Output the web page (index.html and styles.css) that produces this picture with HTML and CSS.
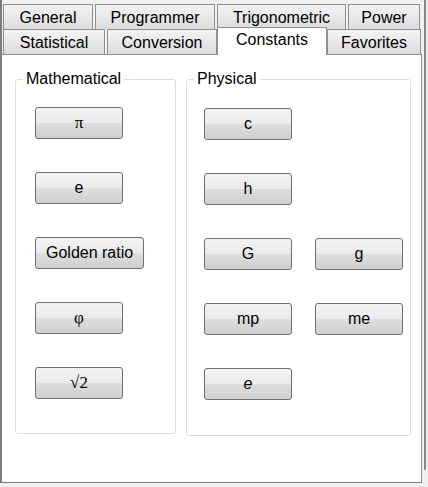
FILE: index.html
```html
<!DOCTYPE html>
<html>
<head>
<meta charset="utf-8">
<link rel="stylesheet" href="styles.css">
</head>
<body>
<div class="window">
  <div class="tabctl">
    <div class="tabstrip">
      <div class="row row-top">
        <div class="tab w-general">General</div>
        <div class="tab w-programmer">Programmer</div>
        <div class="tab w-trig">Trigonometric</div>
        <div class="tab w-power">Power</div>
      </div>
      <div class="row row-bottom">
        <div class="tab w-stat">Statistical</div>
        <div class="tab w-conv">Conversion</div>
        <div class="tab w-const selected">Constants</div>
        <div class="tab w-fav">Favorites</div>
      </div>
    </div>
    <div class="panel">
      <fieldset class="group group-math">
        <legend>Mathematical</legend>
        <div class="grid grid-math">
          <button class="btn sym">π</button>
          <button class="btn">e</button>
          <button class="btn wide">Golden ratio</button>
          <button class="btn sym">φ</button>
          <button class="btn sym">√2</button>
        </div>
      </fieldset>
      <fieldset class="group group-phys">
        <legend>Physical</legend>
        <div class="grid grid-phys">
          <button class="btn c1">c</button>
          <button class="btn c1">h</button>
          <button class="btn c1">G</button>
          <button class="btn">g</button>
          <button class="btn c1">mp</button>
          <button class="btn">me</button>
          <button class="btn c1 ital">e</button>
        </div>
      </fieldset>
    </div>
  </div>
  <div class="edge"><div class="edge-line"></div></div>
</div>
</body>
</html>
```

FILE: styles.css
```css
html, body {
  margin: 0;
  padding: 0;
  background: #f0f0f0;
}
body {
  font-family: "Liberation Sans", Arial, sans-serif;
  font-size: 16px;
  color: #000;
}
.window {
  display: flex;
  width: 428px;
  height: 487px;
}
.tabctl {
  width: 420px;
  height: 483px;
  border-left: 2px solid #7b7b83;
  display: flex;
  flex-direction: column;
}
.tabstrip {
  height: 54px;
  box-sizing: border-box;
  padding: 4px 0 0 1px;
}
.row {
  display: flex;
  gap: 2px;
  height: 25px;
}
.tab {
  box-sizing: border-box;
  height: 25px;
  border: 1px solid #8e9097;
  border-bottom: none;
  background: linear-gradient(#f3f3f3, #e9e9e9 45%, #dcdcdc);
  display: flex;
  align-items: center;
  justify-content: center;
  line-height: 18px;
  padding-top: 1px;
}
.w-general { width: 90px; }
.w-programmer { width: 120px; }
.w-trig { width: 129px; }
.w-power { width: 72px; }
.w-stat { width: 102px; }
.w-conv { width: 110px; }
.w-const { width: 106px; }
.w-fav { width: 94px; }
.tab.selected {
  position: relative;
  z-index: 1;
  background: #fff;
  height: 28px;
  margin: -2px -2px 0 -2px;
  width: 110px;
  padding-top: 0;
  padding-bottom: 3px;
}
.panel {
  flex: 1;
  background: #fff;
  border-top: 1px solid #8e9097;
  border-right: 1px solid #8e9097;
  border-bottom: 1px solid #7b7b83;
  display: flex;
  align-items: flex-start;
  gap: 10px;
  padding: 15px 0 0 13px;
}
.group {
  margin: 0;
  padding: 0;
  min-width: 0;
  border: 1px solid #d5dfe5;
  border-radius: 3px;
}
.group legend {
  margin-left: 7px;
  padding: 0 3px;
  line-height: 18px;
}
.group-math { width: 161px; box-sizing: border-box; }
.group-phys { width: 225px; box-sizing: border-box; }
.grid {
  display: grid;
  row-gap: 33px;
  padding: 19px 0 34px 0;
  justify-items: start;
}
.grid-math {
  grid-template-columns: auto;
  padding-left: 19px;
}
.grid-phys {
  grid-template-columns: 88px 88px;
  column-gap: 23px;
  padding-left: 17px;
  padding-top: 20px;
  padding-bottom: 35px;
}
.c1 { grid-column: 1; }
.btn {
  box-sizing: border-box;
  min-width: 88px;
  height: 32px;
  margin: 0;
  padding: 0 10px;
  border: 1px solid #707070;
  border-radius: 3px;
  background: linear-gradient(#f2f2f2 0%, #ebebeb 48%, #dddddd 52%, #cfcfcf 100%);
  font-family: "Liberation Sans", Arial, sans-serif;
  font-size: 16px;
  color: #000;
  line-height: 18px;
}
.btn.sym {
  font-family: "Liberation Serif", "Times New Roman", serif;
  font-size: 17px;
}
.btn.ital { font-style: italic; }
.edge {
  width: 6px;
  padding-left: 2px;
  box-sizing: border-box;
}
.edge-line {
  width: 2px;
  height: 470px;
  background: #8a8a8a;
}
```
